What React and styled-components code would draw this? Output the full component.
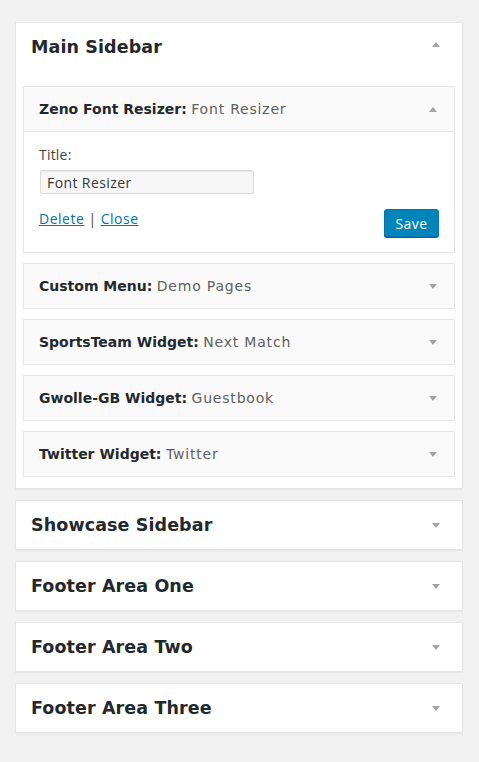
import React from 'react';
import styled, { createGlobalStyle } from 'styled-components';

const GlobalStyle = createGlobalStyle`
  html, body {
    margin: 0;
    padding: 0;
    background: #f1f1f1;
  }
  body {
    font-family: 'Open Sans', sans-serif;
    color: #444;
  }
`;

const Page = styled.div`
  width: 448px;
  padding: 22px 0 20px 15px;
  display: flex;
  flex-direction: column;
  gap: 11px;
`;

const Sidebar = styled.div`
  background: #fff;
  border: 1px solid #e5e5e5;
  box-shadow: 0 1px 1px rgba(0, 0, 0, 0.04);
`;

const SidebarHeader = styled.div`
  height: 48px;
  display: flex;
  align-items: center;
  justify-content: space-between;
  padding: 0 22px 0 15px;
`;

const SidebarTitle = styled.h2`
  margin: 0;
  font-family: 'DejaVu Sans', sans-serif;
  font-size: 17.5px;
  font-weight: bold;
  letter-spacing: 0.1px;
  color: #23282d;
`;

const Arrow = styled.span`
  width: 0;
  height: 0;
  border-left: 4px solid transparent;
  border-right: 4px solid transparent;
  ${(p) =>
    p.$up
      ? 'border-bottom: 5px solid #a0a5aa;'
      : 'border-top: 5px solid #a0a5aa;'}
  margin-top: ${(p) => p.$shift || 0}px;
`;

const WidgetList = styled.div`
  padding: 15px 7px 11px 7px;
  display: flex;
  flex-direction: column;
  gap: 10px;
`;

const Widget = styled.div`
  border: 1px solid #e5e5e5;
  background: #fafafa;
`;

const WidgetHeader = styled.div`
  height: 44px;
  display: flex;
  align-items: center;
  justify-content: space-between;
  padding: 0 17px 0 15px;
  border-bottom: ${(p) => (p.$open ? '1px solid #e5e5e5' : 'none')};
  font-family: 'DejaVu Sans', sans-serif;
  font-size: 14px;
`;

const WidgetName = styled.span`
  color: #23282d;
  font-weight: bold;
`;

const WidgetSub = styled.span`
  color: #606060;
  letter-spacing: 0.8px;
`;

const WidgetBody = styled.div`
  background: #fff;
  padding: 13px 15px 15px 15px;
`;

const Label = styled.label`
  display: block;
  font-size: 14px;
  line-height: 20px;
  letter-spacing: 0.2px;
  color: #444;
`;

const TextInput = styled.input`
  display: block;
  margin: 5px 0 0 1px;
  width: 214px;
  height: 24px;
  box-sizing: border-box;
  padding: 0 6px;
  border: 1px solid #ddd;
  border-radius: 2px;
  background: #f7f7f7;
  box-shadow: inset 0 1px 2px rgba(0, 0, 0, 0.07);
  font-family: 'Open Sans', sans-serif;
  font-size: 14px;
  letter-spacing: 0.4px;
  color: #32373c;
`;

const Controls = styled.div`
  display: flex;
  justify-content: space-between;
  align-items: flex-start;
  margin-top: 15px;
`;

const Links = styled.div`
  font-size: 14px;
  line-height: 20px;
  letter-spacing: 0.5px;
  color: #444;
`;

const Link = styled.a`
  color: #0073aa;
  text-decoration: underline;
  cursor: pointer;
`;

const SaveButton = styled.button`
  width: 55px;
  height: 28px;
  background: #0085ba;
  border: 1px solid #0073aa;
  border-radius: 3px;
  box-shadow: 0 1px 0 #006799;
  color: #fff;
  font-family: 'Open Sans', sans-serif;
  font-size: 14px;
  letter-spacing: 0.4px;
  padding: 0;
  cursor: pointer;
`;

const widgets = [
  { name: 'Custom Menu:', sub: 'Demo Pages' },
  { name: 'SportsTeam Widget:', sub: 'Next Match' },
  { name: 'Gwolle-GB Widget:', sub: 'Guestbook' },
  { name: 'Twitter Widget:', sub: 'Twitter' },
];

const otherSidebars = ['Showcase Sidebar', 'Footer Area One', 'Footer Area Two', 'Footer Area Three'];

function App() {
  return (
    <>
      <GlobalStyle />
      <Page>
        <Sidebar>
          <SidebarHeader>
            <SidebarTitle>Main Sidebar</SidebarTitle>
            <Arrow $up $shift={-5} />
          </SidebarHeader>
          <WidgetList>
            <Widget>
              <WidgetHeader $open>
                <span>
                  <WidgetName>Zeno Font Resizer:</WidgetName> <WidgetSub>Font Resizer</WidgetSub>
                </span>
                <Arrow $up />
              </WidgetHeader>
              <WidgetBody>
                <Label>Title:</Label>
                <TextInput type="text" defaultValue="Font Resizer" />
                <Controls>
                  <Links>
                    <Link>Delete</Link> | <Link>Close</Link>
                  </Links>
                  <SaveButton>Save</SaveButton>
                </Controls>
              </WidgetBody>
            </Widget>
            {widgets.map((w) => (
              <Widget key={w.name}>
                <WidgetHeader>
                  <span>
                    <WidgetName>{w.name}</WidgetName> <WidgetSub>{w.sub}</WidgetSub>
                  </span>
                  <Arrow />
                </WidgetHeader>
              </Widget>
            ))}
          </WidgetList>
        </Sidebar>
        {otherSidebars.map((s) => (
          <Sidebar key={s}>
            <SidebarHeader>
              <SidebarTitle>{s}</SidebarTitle>
              <Arrow />
            </SidebarHeader>
          </Sidebar>
        ))}
      </Page>
    </>
  );
}

export default App;
